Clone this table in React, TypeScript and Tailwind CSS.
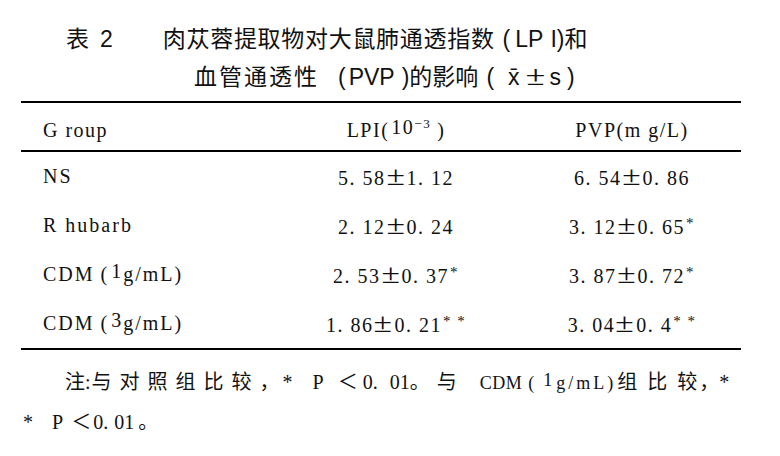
const serif = "font-['Liberation_Serif','Noto_Sans_CJK_SC',serif]";
const cjk = "font-['Noto_Sans_CJK_SC',sans-serif]";

function Pm() {
  return (
    <span className="inline-block w-[19px] mx-[1px] text-center text-[28px] leading-[22px] scale-x-[1.2] font-['Liberation_Serif',serif]">
      ±
    </span>
  );
}

function Star({ n = 1 }: { n?: number }) {
  return (
    <span className="relative -top-[6px] text-[15px] ml-[1px]">
      {n === 2 ? '* *' : '*'}
    </span>
  );
}

function Val({ a, b, stars = 0 }: { a: string; b: string; stars?: number }) {
  return (
    <span className="whitespace-nowrap">
      {a}
      <Pm />
      {b}
      {stars > 0 && <Star n={stars} />}
    </span>
  );
}

function Dose({ d }: { d: string }) {
  return (
    <>
      CDM<span className="ml-[6px]">(</span>
      <span className="relative -top-[3px] ml-[2px]">{d}</span>g/mL)
    </>
  );
}

const rows = [
  { g: <>NS</>, lpi: <Val a="5. 58" b="1. 12" />, pvp: <Val a="6. 54" b="0. 86" /> },
  { g: <>R hubarb</>, lpi: <Val a="2. 12" b="0. 24" />, pvp: <Val a="3. 12" b="0. 65" stars={1} /> },
  { g: <Dose d="1" />, lpi: <Val a="2. 53" b="0. 37" stars={1} />, pvp: <Val a="3. 87" b="0. 72" stars={1} /> },
  { g: <Dose d="3" />, lpi: <Val a="1. 86" b="0. 21" stars={2} />, pvp: <Val a="3. 04" b="0. 4" stars={2} /> },
];

export default function App() {
  return (
    <div className="w-[780px] h-[456px] bg-white text-[#111] overflow-hidden">
      {/* title */}
      <div className="pt-[20px] font-['Liberation_Sans','Noto_Sans_CJK_SC',sans-serif] text-[23px] leading-[38px]">
        <div className="flex pl-[66px] whitespace-nowrap">
          <span>表</span>
          <span className="ml-[11px]">2</span>
          <span className="ml-[50px] tracking-[0.7px]">肉苁蓉提取物对大鼠肺通透指数</span>
          <span className="ml-[8px]">(</span>
          <span className="ml-[5px]">LP</span>
          <span className="ml-[7px]">I)</span>
          <span>和</span>
        </div>
        <div className="flex pl-[194px] whitespace-nowrap">
          <span className="tracking-[2px]">血管通透性</span>
          <span className="ml-[19px]">(</span>
          <span className="ml-[3px]">PVP</span>
          <span className="ml-[7px]">)的影响</span>
          <span className="ml-[8px]">(</span>
          <span className="ml-[14px]">x̄</span>
          <span className="inline-block w-[23px] ml-[4px] text-center text-[25px] font-['Roboto',sans-serif] font-light scale-x-[1.5]">
            ±
          </span>
          <span className="ml-[3px]">s</span>
          <span className="ml-[6px]">)</span>
        </div>
      </div>

      {/* table */}
      <div className={`mt-[5px] mx-[21px] w-[720px] border-y-2 border-black text-[20px] tracking-[1.5px] ${serif}`}>
        <div className="grid h-[49px] grid-cols-[260px_230px_230px] border-b-2 border-black pt-[16px] leading-[22px]">
          <div className="pl-[22px]">G roup</div>
          <div className="text-center whitespace-nowrap">
            LPI(<span className="relative -top-[3px] ml-[2px]">10</span>
            <span className="relative -top-[9px] text-[13px]">−3</span>
            <span className="ml-[6px]">)</span>
          </div>
          <div className="text-center pl-[12px] whitespace-nowrap">PVP(m g/L)</div>
        </div>
        {rows.map((r, i) => (
          <div key={i} className="grid h-[49px] grid-cols-[260px_230px_230px] pt-[13px] leading-[22px]">
            <div className="pl-[22px] whitespace-nowrap tracking-[2px]">{r.g}</div>
            <div className="text-center">{r.lpi}</div>
            <div className="text-center pl-[12px]">{r.pvp}</div>
          </div>
        ))}
      </div>

      {/* note */}
      <div className={`mt-[12px] text-[20px] leading-[38px] ${serif}`}>
        <div className="pl-[65px] whitespace-nowrap">
          <span className={cjk}>注</span>
          <span>:</span>
          <span className={`ml-[1px] tracking-[8px] ${cjk}`}>与对照组比较</span>
          <span className={cjk}>，</span>
          <span className="ml-[3px]">*</span>
          <span className="ml-[20px]">P</span>
          <span className={`ml-[14px] ${cjk}`}>＜</span>
          <span className="ml-[5px]">0.</span>
          <span className="ml-[12px]">01</span>
          <span className={cjk}>。</span>
          <span className={`ml-[7px] ${cjk}`}>与</span>
          <span className="ml-[23px] text-[18px] tracking-[0.5px]">CDM</span>
          <span className="ml-[6px] text-[18px]">(</span>
          <span className="ml-[9px] relative -top-[3px] text-[18px]">1</span>
          <span className="ml-[4px] text-[18px] tracking-[3px]">g/mL)</span>
          <span className={`ml-[1px] tracking-[10px] ${cjk}`}>组比</span>
          <span className={cjk}>较</span>
          <span className={`ml-[2px] ${cjk}`}>，</span>
          <span>*</span>
        </div>
        <div className="pl-[23px] whitespace-nowrap">
          <span>*</span>
          <span className="ml-[19px]">P</span>
          <span className={`ml-[8px] ${cjk}`}>＜</span>
          <span className="ml-[2px]">0.</span>
          <span className="ml-[6px]">01</span>
          <span className={`ml-[4px] ${cjk}`}>。</span>
        </div>
      </div>
    </div>
  );
}
